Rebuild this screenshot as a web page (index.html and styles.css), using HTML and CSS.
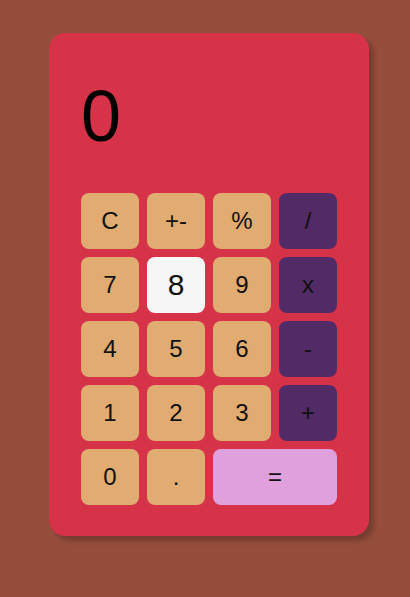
FILE: index.html
```html
<!DOCTYPE html>
<html>
<head>
<meta charset="utf-8">
<link rel="stylesheet" href="styles.css">
</head>
<body>
<div class="calc">
  <div class="display">0</div>
  <div class="keys">
    <div class="key">C</div>
    <div class="key">+-</div>
    <div class="key">%</div>
    <div class="key op">/</div>
    <div class="key">7</div>
    <div class="key active">8</div>
    <div class="key">9</div>
    <div class="key op">x</div>
    <div class="key">4</div>
    <div class="key">5</div>
    <div class="key">6</div>
    <div class="key op">-</div>
    <div class="key">1</div>
    <div class="key">2</div>
    <div class="key">3</div>
    <div class="key op">+</div>
    <div class="key">0</div>
    <div class="key">.</div>
    <div class="key eq">=</div>
  </div>
</div>
</body>
</html>
```
FILE: styles.css
```css
html, body {
  margin: 0;
  padding: 0;
}
body {
  background: #964e3c;
  width: 410px;
  height: 597px;
  padding: 33px 0 0 49px;
  box-sizing: border-box;
  font-family: "Liberation Sans", Arial, sans-serif;
  color: #111;
}
.calc {
  width: 320px;
  box-sizing: border-box;
  padding: 32px 32px 31px 32px;
  background: #d63248;
  border-radius: 16px;
  box-shadow: 5px 5px 5px rgba(0, 0, 0, 0.22);
}
.display {
  font-size: 72px;
  line-height: 82px;
  padding: 10px 0 0 0;
  height: 83px;
  margin-bottom: 35px;
  color: #000;
}
.keys {
  display: grid;
  grid-template-columns: repeat(4, 58px);
  grid-auto-rows: 56px;
  gap: 8px;
}
.key {
  background: #e0ac71;
  border-radius: 8px;
  display: flex;
  align-items: center;
  justify-content: center;
  font-size: 24px;
  color: #111;
}
.key.op {
  background: #522a66;
}
.key.active {
  background: #f6f6f6;
  font-size: 30px;
}
.key.eq {
  grid-column: span 2;
  background: #dfa0db;
}
```
